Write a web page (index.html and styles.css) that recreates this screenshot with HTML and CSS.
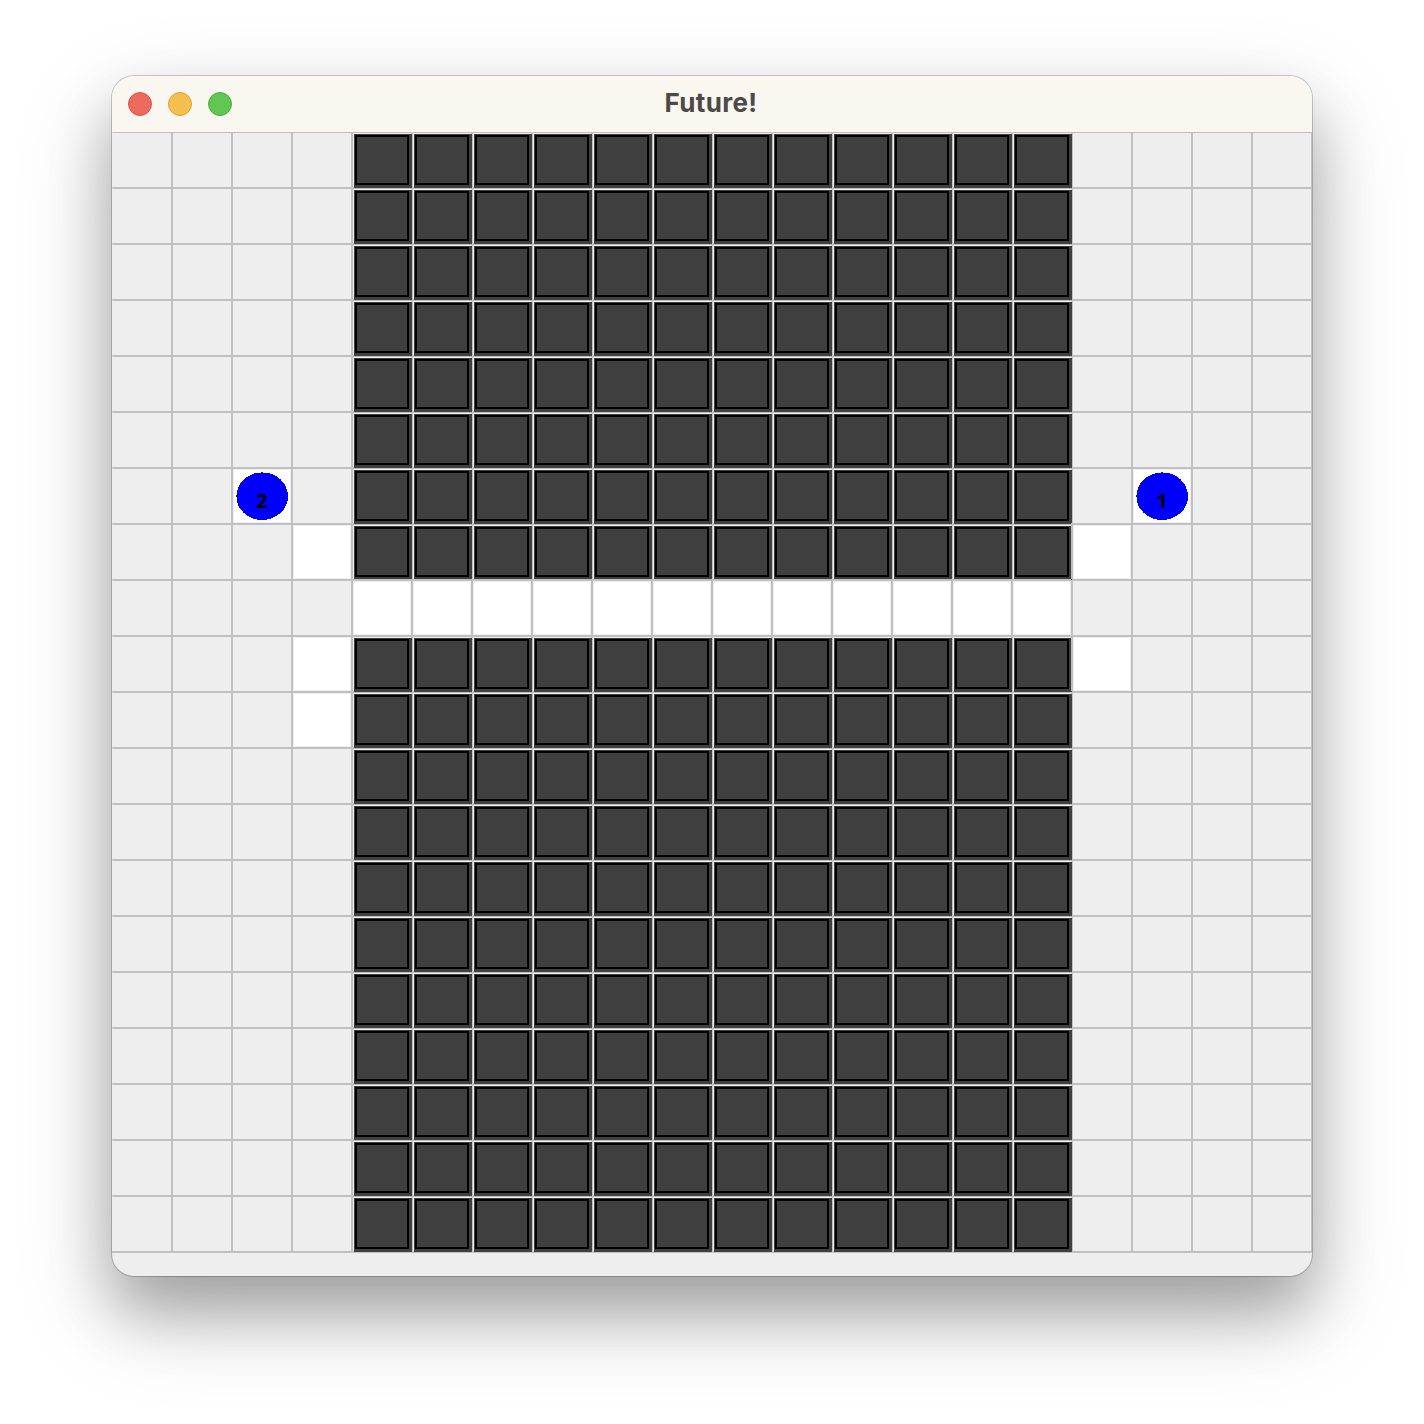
FILE: index.html
```html
<!DOCTYPE html>
<html lang="en">
<head>
<meta charset="utf-8">
<title>Future!</title>
<link rel="stylesheet" href="styles.css">
</head>
<body>
<main class="window">
  <header class="titlebar">
    <div class="controls">
      <span class="control close"></span>
      <span class="control minimize"></span>
      <span class="control maximize"></span>
    </div>
    <h1 class="title">Future!</h1>
  </header>
  <div class="board" id="board"></div>
</main>
<script src="board.js"></script>
</body>
</html>
```
FILE: styles.css
```css
* { box-sizing: border-box; }
body { margin: 0; background: #fff; height: 1424px; overflow: hidden; }
.window {
  width: 1200px;
  height: 1200px;
  margin: 76px 0 0 112px;
  border-radius: 22px;
  background: #eee;
  overflow: hidden;
  box-shadow: 0 0 0 1px rgba(0, 0, 0, .2), 0 36px 60px rgba(0, 0, 0, .26), 0 36px 100px rgba(0, 0, 0, .18);
}
.titlebar {
  position: relative;
  z-index: 3;
  display: grid;
  grid-template-columns: 1fr auto 1fr;
  align-items: center;
  height: 56px;
  padding: 0 16px;
  background: #faf7f0;
}
.controls { display: flex; gap: 16px; }
.control { width: 24px; height: 24px; border-radius: 50%; border: 1px solid; }
.close { background: #ed6a5f; border-color: #d75549; }
.minimize { background: #f5bf4f; border-color: #d9a03a; }
.maximize { background: #62c655; border-color: #51aa42; }
.title {
  margin: 0;
  color: #4b4a47;
  font: 700 26px/32px Inter, sans-serif;
  letter-spacing: .35px;
  transform: translate(-1px, -1px);
}
.board {
  display: grid;
  grid-template-columns: repeat(20, 60px);
  grid-auto-rows: 56px;
  width: 1202px;
  margin: -1px 0 0 -1px;
  border-right: 2px solid silver;
  border-bottom: 2px solid silver;
}
.cell {
  border-left: 2px solid silver;
  border-top: 2px solid silver;
  background: #eee;
}
.cell.edge { border-left-color: #eee; }
.wall::after {
  content: "";
  display: block;
  position: relative;
  z-index: 1;
  width: 58px;
  height: 54px;
  margin: 1px 0 0 1px;
  background: linear-gradient(#404040, #404040) 3px 3px / 50px 46px no-repeat, linear-gradient(#000, #000) 1px 1px / 54px 50px no-repeat, #404040;
}
.open {
  position: relative;
  z-index: 2;
  background: #fff;
  box-shadow: inset 0 0 0 1px #eee;
}
.agent { display: block; width: 52px; height: 48px; margin: 3px; }
.agent text { font: 700 20px "Open Sans", sans-serif; text-anchor: middle; }
```
FILE: board.js
```js
const rows = 20, columns = 20;
const open = new Set(["6,2", "6,17", "7,3", "7,16", "9,3", "9,16", "10,3"]);
const agents = { "6,2": "2", "6,17": "1" };
const board = document.getElementById("board");

for (let row = 0; row < rows; row++) {
  for (let column = 0; column < columns; column++) {
    const key = `${row},${column}`;
    const cell = document.createElement("div");
    const middle = column >= 4 && column <= 15;
    cell.className = "cell";
    if (column === 0) cell.classList.add("edge");
    if (middle && row !== 8) cell.classList.add("wall");
    if (open.has(key) || (middle && row === 8)) cell.classList.add("open");
    if (agents[key]) {
      cell.innerHTML = `<svg class="agent" viewBox="0 0 52 48"><ellipse cx="26.2" cy="24.2" rx="25.8" ry="23.8" fill="#00f" shape-rendering="crispEdges"/><text x="25.9" y="36">${agents[key]}</text></svg>`;
    }
    board.append(cell);
  }
}
```
